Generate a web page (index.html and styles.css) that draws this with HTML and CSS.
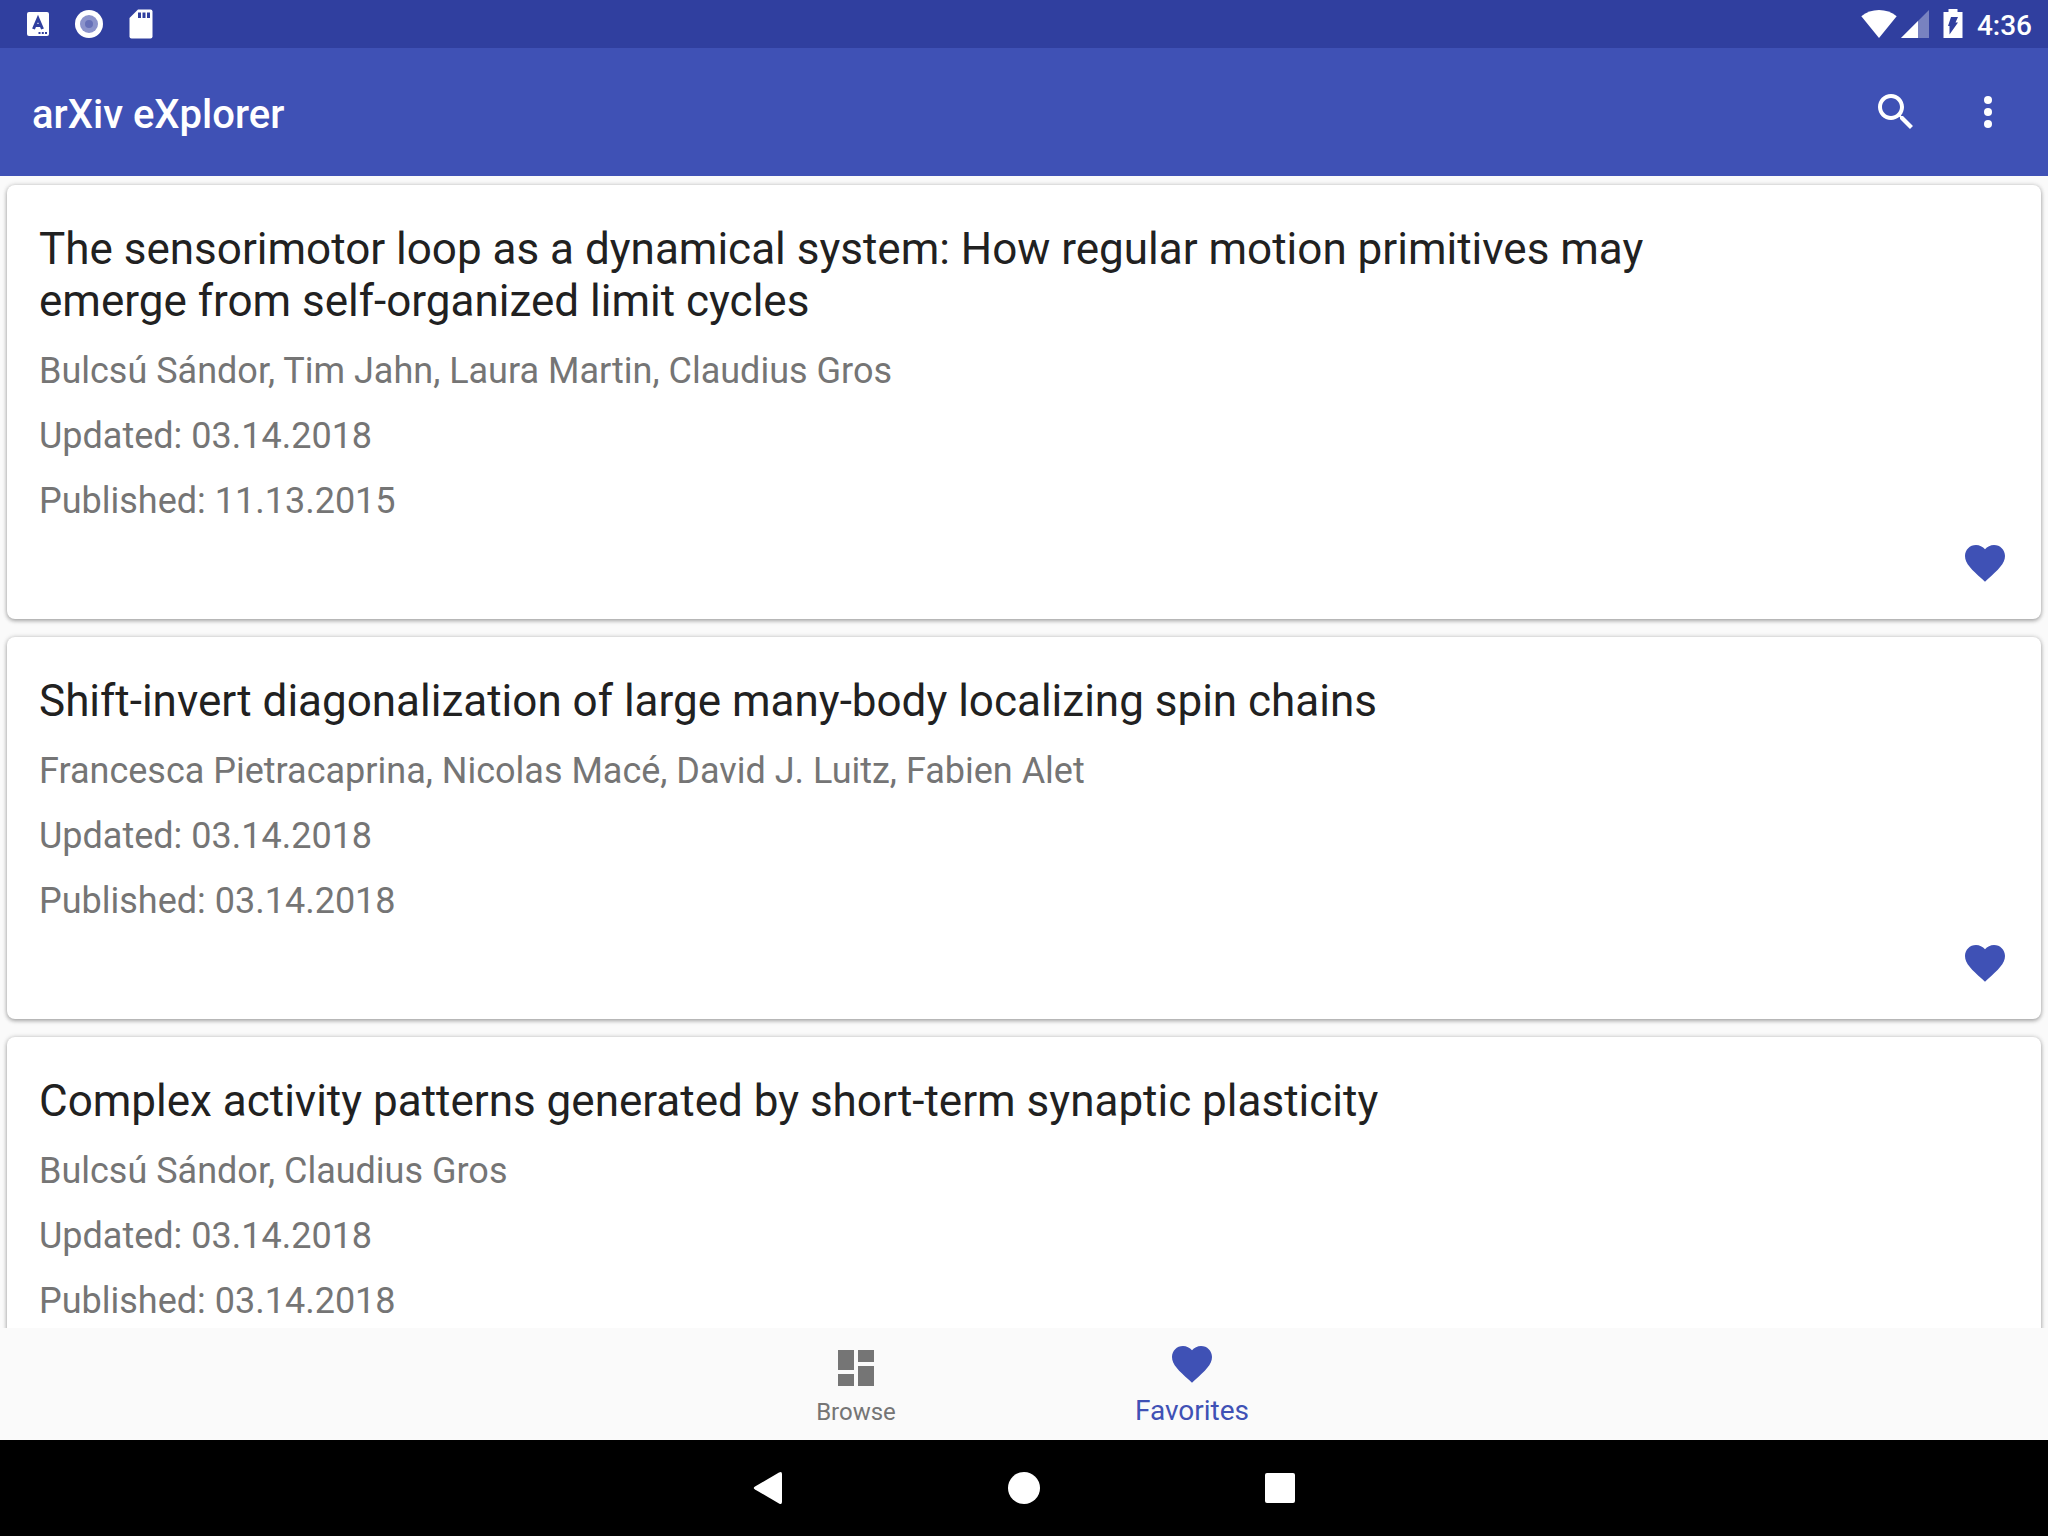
FILE: index.html
```html
<!DOCTYPE html>
<html lang="en">
<head>
<meta charset="utf-8">
<meta name="viewport" content="width=device-width, initial-scale=1">
<title>arXiv eXplorer</title>
<link rel="stylesheet" href="styles.css">
</head>
<body>
<svg class="sprites" aria-hidden="true">
  <symbol id="heart" viewBox="0 0 24 24"><path d="M12 21.35l-1.45-1.32C5.4 15.36 2 12.28 2 8.5 2 5.42 4.42 3 7.5 3c1.74 0 3.41.81 4.5 2.09C13.09 3.81 14.76 3 16.5 3 19.58 3 22 5.42 22 8.5c0 3.78-3.4 6.86-8.55 11.54L12 21.35z"/></symbol>
</svg>

<div class="status-bar">
  <div class="status-group notifications">
    <svg width="22" height="24" viewBox="0 0 22 24"><rect width="22" height="24" rx="2" fill="#fff"/><path d="M6.500 17L11 6.500L15.500 17M8.500 13.500H13.500" fill="none" stroke="#303f9f" stroke-width="3"/><path d="M11.500 20h2v2h-2zM14.800 20h2v2h-2zM18 20h2v2h-2z" fill="#303f9f"/></svg>
    <svg width="28" height="28" viewBox="0 0 28 28"><circle cx="14" cy="14" r="14" fill="#fff"/><circle cx="14" cy="14" r="9" fill="#8b93cb"/><circle cx="14" cy="14" r="4" fill="#6670b8"/></svg>
    <svg width="24" height="30" viewBox="0 0 24 30"><path d="M9 .5H21.500a2 2 0 0 1 2 2V27.500a2 2 0 0 1-2 2H2.500a2 2 0 0 1-2-2V9z" fill="#fff"/><path d="M9 3.500h3v5.500H9zM13.500 3.500h3v5.500h-3zM18 3.500h3v5.500h-3z" fill="#303f9f"/></svg>
  </div>
  <div class="status-group system">
    <div class="signals">
      <svg width="36" height="28" viewBox="0 0 36 28"><path d="M.3 6.200C10-2 26-2 35.700 6.200L18 28z" fill="#fff"/></svg>
      <svg width="28" height="28" viewBox="0 0 28 28"><path d="M28 0V28H0z" fill="#fff" opacity=".35"/><path d="M17 11V28H0z" fill="#fff"/></svg>
    </div>
    <svg width="20" height="30" viewBox="0 0 20 30"><path d="M5.500 0h9v3H19.500V29H.5V3H5.500z" fill="#fff"/><path d="M8 8h7l-2.500 5.500H15L6.500 25.500V17H5z" fill="#303f9f"/></svg>
    <time class="clock" datetime="04:36">4:36</time>
  </div>
</div>

<header class="app-bar">
  <h1 class="app-title">arXiv eXplorer</h1>
  <div class="app-actions">
    <button class="icon-button" type="button" aria-label="Search"><svg class="icon" viewBox="0 0 24 24"><path d="M15.500 14h-.79l-.28-.27C15.410 12.590 16 11.110 16 9.500 16 5.910 13.090 3 9.500 3S3 5.910 3 9.500 5.910 16 9.500 16c1.610 0 3.090-.59 4.230-1.570l.27.28v.79l5 4.990L20.490 19l-4.990-5zm-6 0C7.010 14 5 11.990 5 9.500S7.010 5 9.500 5 14 7.010 14 9.500 11.990 14 9.500 14z"/></svg></button>
    <button class="icon-button" type="button" aria-label="More options"><svg class="icon" viewBox="0 0 24 24"><circle cx="12" cy="6" r="2"/><circle cx="12" cy="12" r="2"/><circle cx="12" cy="18" r="2"/></svg></button>
  </div>
</header>

<main class="papers">
  <article class="card">
    <h2 class="card-title">The sensorimotor loop as a dynamical system: How regular motion primitives may emerge from self-organized limit cycles</h2>
    <p class="card-line">Bulcsú Sándor, Tim Jahn, Laura Martin, Claudius Gros</p>
    <p class="card-line">Updated: 03.14.2018</p>
    <p class="card-line">Published: 11.13.2015</p>
    <button class="icon-button favorite" type="button" aria-label="Remove from favorites"><svg class="icon"><use href="#heart"/></svg></button>
  </article>
  <article class="card">
    <h2 class="card-title">Shift-invert diagonalization of large many-body localizing spin chains</h2>
    <p class="card-line">Francesca Pietracaprina, Nicolas Macé, David J. Luitz, Fabien Alet</p>
    <p class="card-line">Updated: 03.14.2018</p>
    <p class="card-line">Published: 03.14.2018</p>
    <button class="icon-button favorite" type="button" aria-label="Remove from favorites"><svg class="icon"><use href="#heart"/></svg></button>
  </article>
  <article class="card">
    <h2 class="card-title">Complex activity patterns generated by short-term synaptic plasticity</h2>
    <p class="card-line">Bulcsú Sándor, Claudius Gros</p>
    <p class="card-line">Updated: 03.14.2018</p>
    <p class="card-line">Published: 03.14.2018</p>
    <button class="icon-button favorite" type="button" aria-label="Remove from favorites"><svg class="icon"><use href="#heart"/></svg></button>
  </article>
</main>

<nav class="tabs" aria-label="Sections">
  <button class="tab" type="button"><svg class="icon" viewBox="0 0 24 24"><path d="M3 13h8V3H3v10zm0 8h8v-6H3v6zm10 0h8V11h-8v10zm0-18v6h8V3h-8z"/></svg><span>Browse</span></button>
  <button class="tab tab-active" type="button" aria-current="page"><svg class="icon"><use href="#heart"/></svg><span>Favorites</span></button>
</nav>

<div class="system-nav">
  <button class="icon-button" type="button" aria-label="Back"><svg class="icon" viewBox="0 0 48 48"><path d="M11 22.500L35 8.500Q38 7 38 10V38Q38 41 35 39.500L11 25.500Q8.500 24 11 22.500z"/></svg></button>
  <button class="icon-button" type="button" aria-label="Home"><svg class="icon" viewBox="0 0 48 48"><circle cx="24" cy="24" r="16"/></svg></button>
  <button class="icon-button" type="button" aria-label="Recent apps"><svg class="icon" viewBox="0 0 48 48"><rect x="9" y="9" width="30" height="30" rx="2"/></svg></button>
</div>
</body>
</html>
```
FILE: styles.css
```css
* {
  box-sizing: border-box;
}

body {
  margin: 0;
  height: 100vh;
  display: flex;
  flex-direction: column;
  overflow: hidden;
  background: #fafafa;
  color: #212121;
  font-family: Roboto, sans-serif;
}

h1, h2, p {
  margin: 0;
  font-weight: 400;
}

button {
  margin: 0;
  padding: 0;
  border: 0;
  background: none;
  color: inherit;
  font: inherit;
  cursor: pointer;
}

svg {
  display: block;
}

.sprites {
  display: none;
}

.icon {
  width: 48px;
  height: 48px;
  fill: currentColor;
}

.status-bar {
  flex: none;
  display: flex;
  align-items: center;
  justify-content: space-between;
  height: 48px;
  padding: 0 16px 0 27px;
  background: #303f9f;
  color: #fff;
}

.status-group {
  display: flex;
  align-items: center;
}

.notifications {
  gap: 26px;
}

.system {
  gap: 14px;
}

.signals {
  display: flex;
  gap: 4px;
}

.clock {
  font-size: 28px;
  font-weight: 500;
  line-height: 32px;
  padding-top: 4px;
}

.app-bar {
  flex: none;
  display: flex;
  align-items: center;
  justify-content: space-between;
  height: 128px;
  padding: 0 36px 0 32px;
  background: #3f51b5;
  color: #fff;
}

.app-title {
  font-size: 40px;
  font-weight: 500;
  line-height: 48px;
  padding-top: 6px;
}

.app-actions {
  display: flex;
  gap: 44px;
}

.papers {
  flex: 1;
  min-height: 0;
  display: flex;
  flex-direction: column;
  gap: 18px;
  padding: 9px 7px;
  overflow: hidden;
}

.card {
  flex: none;
  display: flex;
  flex-direction: column;
  padding: 38px 32px 32px;
  border-radius: 8px;
  background: #fff;
  box-shadow: 0 2px 4px rgba(0, 0, 0, 0.28), 0 0 5px rgba(0, 0, 0, 0.18);
}

.card-title {
  max-width: 85%;
  padding-bottom: 12px;
  font-size: 44px;
  line-height: 52px;
}

.card-line {
  color: #757575;
  font-size: 36px;
  line-height: 65px;
}

.favorite {
  align-self: flex-end;
  margin-top: 5px;
  color: #3f51b5;
}

.tabs {
  flex: none;
  display: flex;
  justify-content: center;
  height: 112px;
  background: #fafafa;
}

.tab {
  display: flex;
  flex-direction: column;
  align-items: center;
  gap: 4px;
  width: 336px;
  padding-top: 16px;
  color: #757575;
  font-size: 24px;
  line-height: 32px;
}

.tab-active {
  padding-top: 12px;
  gap: 7px;
  color: #3f51b5;
  font-size: 28px;
}

.system-nav {
  flex: none;
  display: flex;
  align-items: center;
  justify-content: center;
  gap: 208px;
  height: 96px;
  background: #000;
  color: #fff;
}
```
